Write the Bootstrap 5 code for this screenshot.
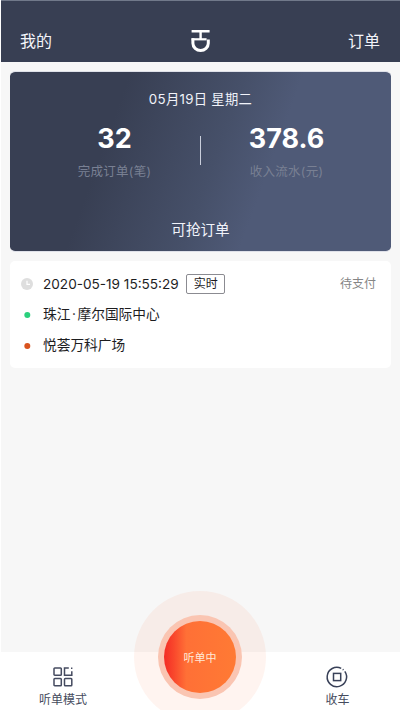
<!DOCTYPE html>
<html lang="zh-CN">
<head>
<meta charset="utf-8">
<meta name="viewport" content="width=device-width, initial-scale=1">
<title>听单</title>
<link rel="stylesheet" href="https://cdn.jsdelivr.net/npm/bootstrap@5.3.0/dist/css/bootstrap.min.css">
<style>
body{font-family:Inter,"Noto Sans CJK SC",sans-serif;background:#f7f7f7;color:#1d1d1f}
.screen{height:710px;border-left:1px solid #fff}
.topbar{height:62px;margin-left:-1px;padding:18px 20px 0 19px;background:#383f53;border-top:1px solid #71798a;border-left:1px solid #71798a;color:#f3f4fa;font-size:16px}
.content{padding:9px 9px 0}
.summary{height:181px;border-radius:5px;border:1px solid #dfe1e9;border-width:1px 0;background:linear-gradient(110deg,#383f53 0%,#383f53 27%,#465069 53%,#4f5a77 66%,#4f5a77 100%) padding-box;color:#f1f3fa}
.date{font-size:13.3px;line-height:20px;padding-top:17px;letter-spacing:.3px}
.figures{margin-top:13px;height:66px}
.figure-box{width:171px}
.amount{font-size:27px;line-height:34px;font-weight:700;color:#fff}
.caption{font-size:12.5px;line-height:20px;margin-top:6px;color:#798093;letter-spacing:.3px}
.rule{width:1px;height:29px;margin-top:14px;background:#c9cedb}
.grab{font-size:14.6px;line-height:22px;margin-top:31px}
.order{height:107px;margin-top:9px;border-radius:5px;padding:12px 15px 0 11px;font-size:13.7px}
.line{height:21px}
.line+.line{margin-top:10px}
.marker{width:22px;flex:none}
.marker svg{display:block}
.stamp{font-size:13.6px;padding-top:1px}
.dot-sep{margin:0 1.6px}
.tag{font-size:12px;width:39px;height:20px;line-height:18px;border:1px solid #8b8b91;border-radius:2px;margin-left:7.5px}
.state{font-size:12px;color:#858585}
.bottombar{height:58px;padding:15px 50.5px 0 38px;color:#454b5d;font-size:12px;line-height:18px}
.bottombar svg{display:block;margin-bottom:4px}
.halo{position:absolute;left:133px;top:-61px;width:132px;height:132px;border-radius:50%;background:rgba(255,112,60,.075)}
.ring{width:84px;height:84px;border-radius:50%;background:#fac5b2}
.listen{width:72px;height:72px;border-radius:50%;background:linear-gradient(90deg,#f32c25 0%,#f9482c 14%,#ff7036 31%,#ff7a34 100%);color:#ffe9d8;font-size:11px;line-height:74px}
</style>
<script src="https://cdn.jsdelivr.net/npm/bootstrap@5.3.0/dist/js/bootstrap.bundle.min.js"></script>
</head>
<body>
<div class="screen d-flex flex-column overflow-hidden">
  <header class="topbar d-flex justify-content-between align-items-center">
    <span>我的</span>
    <svg width="20" height="24" viewBox="-.6 0 20 24" fill="none" stroke="#fff"><path d="M1 2.2h18M10 2v8" stroke-width="2.4"/><path d="M1 10.3h15" stroke-width="2.2"/><path d="M2.3 9.3v5a7.7 7.2 0 0 0 15.4 0V10.4" stroke-width="3"/></svg>
    <span>订单</span>
  </header>
  <main class="content flex-grow-1">
    <section class="summary text-center">
      <div class="date">05月19日 星期二</div>
      <div class="figures d-flex justify-content-center">
        <div class="figure-box"><div class="amount">32</div><div class="caption">完成订单(笔)</div></div>
        <div class="rule"></div>
        <div class="figure-box"><div class="amount">378.6</div><div class="caption">收入流水(元)</div></div>
      </div>
      <div class="grab">可抢订单</div>
    </section>
    <section class="order bg-white">
      <div class="line d-flex align-items-center">
        <div class="marker"><svg width="12" height="12" viewBox="0 0 12 12"><circle cx="6" cy="6" r="6" fill="#dedede"/><path d="M6 2.8v3.6h3" fill="none" stroke="#fff" stroke-width="1.2"/></svg></div>
        <span class="stamp">2020-05-19 15:55:29</span>
        <span class="tag text-center">实时</span>
        <span class="state ms-auto">待支付</span>
      </div>
      <div class="line d-flex align-items-center">
        <div class="marker"><svg width="12" height="12"><circle cx="6.3" cy="6" r="3" fill="#2bd07d"/></svg></div>
        <span>珠江<span class="dot-sep">·</span>摩尔国际中心</span>
      </div>
      <div class="line d-flex align-items-center">
        <div class="marker"><svg width="12" height="12"><circle cx="6.3" cy="6" r="3" fill="#d9531e"/></svg></div>
        <span>悦荟万科广场</span>
      </div>
    </section>
  </main>
  <footer class="bottombar position-relative bg-white d-flex justify-content-between">
    <div class="d-flex flex-column align-items-center">
      <svg width="20" height="20" viewBox="0 0 20 20" fill="none" stroke="#454b60" stroke-width="1.5"><rect x="1" y="1" width="7.3" height="7.3" rx=".8"/><rect x="1" y="11.5" width="7.3" height="7.3" rx=".8"/><rect x="11.5" y="11.5" width="7.3" height="7.3" rx=".8"/><path d="M15.8 1h-4.3v7.3h7.3V4.2M18 1.3h1.4"/></svg>
      <span>听单模式</span>
    </div>
    <div class="d-flex flex-column align-items-center">
      <svg width="22" height="20" viewBox="0 0 22 20" overflow="visible" fill="none" stroke="#394158" stroke-width="1.5"><path d="M15.2 1.3A9.7 9.7 0 1 0 18.8 4.4M16.7 2.3l.8.6"/><rect x="7.5" y="6.4" width="7.2" height="7.2"/></svg>
      <span>收车</span>
    </div>
    <div class="halo d-flex align-items-center justify-content-center"><div class="ring d-flex align-items-center justify-content-center"><div class="listen text-center">听单中</div></div></div>
  </footer>
</div>
</body>
</html>
